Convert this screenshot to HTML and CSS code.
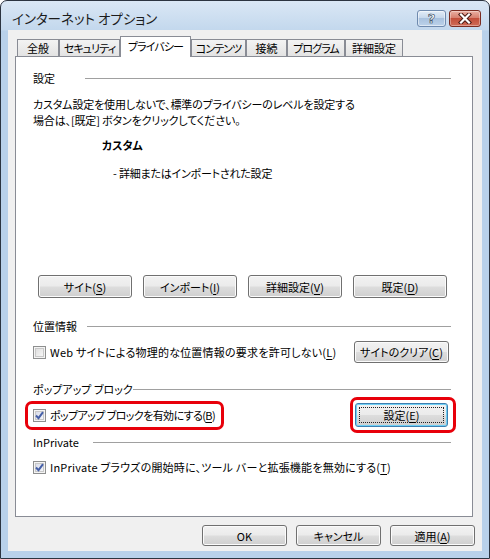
FILE: index.html
```html
<!DOCTYPE html>
<html lang="ja">
<head>
<meta charset="utf-8">
<title>インターネット オプション</title>
<link rel="stylesheet" href="styles.css">
</head>
<body>
<div class="window">
  <div class="titlebar">
    <div class="title">インターネット オプション</div>
    <div class="caption-buttons">
      <div class="cap help"><span>?</span></div>
      <div class="cap close">
        <svg width="16" height="11" viewBox="0 0 16 11">
          <path d="M4 1.5 L12 9.5 M12 1.5 L4 9.5" stroke="#4a1a14" stroke-width="4.2" stroke-linecap="square" fill="none"/>
          <path d="M4 1.5 L12 9.5 M12 1.5 L4 9.5" stroke="#ffffff" stroke-width="2.2" stroke-linecap="square" fill="none"/>
        </svg>
      </div>
    </div>
  </div>
  <div class="client">
    <div class="tabs">
      <div class="tab t1">全般</div>
      <div class="tab t2">セキュリティ</div>
      <div class="tab t3 active">プライバシー</div>
      <div class="tab t4">コンテンツ</div>
      <div class="tab t5">接続</div>
      <div class="tab t6">プログラム</div>
      <div class="tab t7">詳細設定</div>
    </div>
    <div class="panel">
      <div class="gh"><span>設定</span><i class="rule r1"></i></div>
      <p class="desc">カスタム設定を使用しないで、標準のプライバシーのレベルを設定する<br>場合は、[既定] ボタンをクリックしてください。</p>
      <div class="level">カスタム</div>
      <div class="level-desc">- 詳細またはインポートされた設定</div>
      <div class="btn-row">
        <div class="btn w94">サイト(<u>S</u>)</div>
        <div class="btn w94">インポート(<u>I</u>)</div>
        <div class="btn w94">詳細設定(<u>V</u>)</div>
        <div class="btn w94">既定(<u>D</u>)</div>
      </div>

      <div class="gh g2"><span>位置情報</span><i class="rule r2"></i></div>
      <div class="row row2">
        <div class="check">
          <span class="cb"></span>
          <span class="loose">Web サイトによる物理的な位置情報の要求を許可しない(<u>L</u>)</span>
        </div>
        <div class="btn clear">サイトのクリア(<u>C</u>)</div>
      </div>

      <div class="gh g3"><span>ポップアップ ブロック</span><i class="rule r3"></i></div>
      <div class="row row3">
        <div class="check marked">
          <span class="cb on">
            <svg width="11" height="11" viewBox="0 0 11 11"><path d="M2 5.5 L4.5 8.2 L9 2.2" stroke="#4660a8" stroke-width="2" fill="none"/></svg>
          </span>
          <span class="tight">ポップアップ ブロックを有効にする(<u>B</u>)</span>
        </div>
        <div class="btn default marked-btn"><span class="focus">設定(<u>E</u>)</span></div>
      </div>

      <div class="gh g4"><span>InPrivate</span><i class="rule r4"></i></div>
      <div class="row row4">
        <div class="check">
          <span class="cb on">
            <svg width="11" height="11" viewBox="0 0 11 11"><path d="M2 5.5 L4.5 8.2 L9 2.2" stroke="#4660a8" stroke-width="2" fill="none"/></svg>
          </span>
          <span class="loose">InPrivate ブラウズの開始時に、ツール バーと拡張機能を無効にする(<u>T</u>)</span>
        </div>
      </div>
    </div>
    <div class="footer">
      <div class="btn foot">OK</div>
      <div class="btn foot">キャンセル</div>
      <div class="btn foot">適用(<u>A</u>)</div>
    </div>
  </div>
</div>
</body>
</html>
```

FILE: styles.css
```css
html, body {
  margin: 0;
  padding: 0;
}
body {
  width: 490px;
  height: 559px;
  overflow: hidden;
  background: #ffffff;
  font-family: "Noto Sans CJK JP", "Noto Sans", sans-serif;
  font-size: 11px;
  font-feature-settings: "palt" 1;
  color: #000;
}
.window {
  width: 490px;
  height: 559px;
  box-sizing: border-box;
  border: 1px solid #2c3440;
  border-radius: 7px 7px 0 0;
  background: linear-gradient(#dae7f5 0px, #c3d8ed 29px, #b9d1ea 30px);
  padding: 0 7px 7px 7px;
  display: flex;
  flex-direction: column;
}
.titlebar {
  height: 29px;
  display: flex;
  justify-content: space-between;
}
.title {
  padding-left: 4px;
  margin-top: 8px;
  font-size: 13.5px;
  line-height: 18px;
  color: #1c1c1c;
}
.caption-buttons {
  display: flex;
  gap: 3px;
  margin-top: 9px;
  margin-right: 1px;
}
.cap {
  box-sizing: border-box;
  height: 17px;
  border-radius: 3px;
  display: flex;
  align-items: center;
  justify-content: center;
}
.help {
  width: 29px;
  border: 1px solid #6f8aae;
  background: linear-gradient(#e3edf8 0%, #c6d8ec 45%, #a9c2df 50%, #bcd2ea 100%);
  box-shadow: inset 0 0 0 1px rgba(255,255,255,0.5);
}
.help span {
  font-family: "DejaVu Sans", sans-serif;
  font-weight: bold;
  font-size: 13px;
  line-height: 13px;
  color: #fff;
  -webkit-text-stroke: 0.6px #2b3a52;
}
.close {
  width: 32px;
  border: 1px solid #7a2c22;
  background: linear-gradient(#eab0a3 0%, #d7806f 45%, #c24f3b 50%, #cf6b57 100%);
  box-shadow: inset 0 0 0 1px rgba(255,255,255,0.35);
}
.client {
  flex: 1;
  background: #f0f0f0;
  padding: 6px 9px 0 7px;
  display: flex;
  flex-direction: column;
}
.tabs {
  display: flex;
  align-items: flex-end;
  height: 20px;
  margin-left: 2px;
}
.tab {
  box-sizing: border-box;
  height: 17px;
  border: 1px solid #898c95;
  border-bottom: none;
  background: linear-gradient(#f3f3f3, #e3e3e3);
  text-align: center;
  line-height: 16px;
  white-space: nowrap;
  font-size: 11px;
  letter-spacing: -0.9px;
}
.tab.active {
  height: 21px;
  margin-bottom: -1px;
  background: #ffffff;
  position: relative;
  z-index: 1;
  line-height: 18px;
}
.t1 { width: 42px; letter-spacing: 0; }
.t2 { width: 61px; }
.t3 { width: 71px; }
.t4 { width: 55px; }
.t5 { width: 41px; letter-spacing: 0; }
.t6 { width: 58px; }
.t7 { width: 58px; letter-spacing: 0; }
.panel {
  flex: 1;
  border: 1px solid #898c95;
  background: #ffffff;
  padding: 13px 21px 0 17px;
  display: flex;
  flex-direction: column;
}
.gh {
  display: flex;
  align-items: center;
  height: 16px;
  line-height: 16px;
  white-space: nowrap;
}
.rule {
  margin-left: auto;
  height: 0;
  border-top: 1px solid #a0a0a0;
}
.r1 { width: 366px; }
.r2 { width: 364px; }
.r3 { width: 331px; }
.r4 { width: 358px; }
.desc {
  margin: 10px 0 0 0;
  line-height: 16px;
  letter-spacing: -0.15px;
}
.level {
  margin-top: 9px;
  margin-left: 69px;
  font-weight: bold;
  line-height: 16px;
}
.level-desc {
  margin-top: 12px;
  margin-left: 80px;
  line-height: 16px;
  letter-spacing: -0.2px;
}
.btn-row {
  margin-top: 94px;
  padding-left: 5px;
  display: flex;
  gap: 11px;
}
.btn {
  box-sizing: border-box;
  height: 23px;
  border: 1px solid #707070;
  border-radius: 3px;
  background: linear-gradient(#f2f2f2 0%, #ebebeb 48%, #dddddd 52%, #cfcfcf 100%);
  box-shadow: inset 0 0 0 1px #fbfbfb;
  display: flex;
  align-items: center;
  justify-content: center;
  white-space: nowrap;
  line-height: 16px;
}
.w94 { width: 94px; }
.g2 { margin-top: 20px; }
.row {
  display: flex;
  align-items: center;
  justify-content: space-between;
}
.row2 {
  margin-top: 7px;
  height: 22px;
}
.clear {
  width: 95px;
  height: 22px;
  margin-right: 2px;
}
.g3 { margin-top: 18px; }
.row3 {
  margin-top: 6px;
  height: 24px;
}
.g4 { margin-top: 7px; }
.row4 {
  margin-top: 9px;
  height: 16px;
}
.check {
  display: flex;
  align-items: center;
  gap: 4px;
  line-height: 16px;
  white-space: nowrap;
  position: relative;
}
.tight {
  letter-spacing: -0.6px;
}
.loose {
  letter-spacing: 0.22px;
}
.cb {
  box-sizing: border-box;
  width: 13px;
  height: 13px;
  border: 1px solid #8e8f8f;
  background: linear-gradient(135deg, #d8d8d8 0%, #f2f2f2 70%, #ffffff 100%);
  box-shadow: inset 0 0 0 1px #f4f4f4, inset 0 0 0 2px #c8c8c8;
  display: flex;
  align-items: center;
  justify-content: center;
}
.cb.on {
  background: linear-gradient(135deg, #d2d6e6 0%, #eef0f6 70%, #ffffff 100%);
}
.marked::after {
  content: "";
  position: absolute;
  left: -8px;
  top: -6px;
  bottom: -7px;
  width: 199px;
  box-sizing: border-box;
  border: 3px solid #e8000a;
  border-radius: 7px;
}
.default {
  width: 93px;
  height: 24px;
  margin-right: 3px;
  border-color: #3c7fb1;
  box-shadow: inset 0 0 0 1px #6fd0f4;
  position: relative;
}
.default .focus {
  box-sizing: border-box;
  position: absolute;
  inset: 3px;
  border: 1px dotted #222;
  display: flex;
  align-items: center;
  justify-content: center;
}
.marked-btn::after {
  content: "";
  position: absolute;
  left: -6px;
  right: -9px;
  top: -7px;
  bottom: -7px;
  border: 3px solid #e8000a;
  border-radius: 7px;
}
.footer {
  margin-top: 8px;
  margin-right: -2px;
  margin-bottom: 5px;
  display: flex;
  justify-content: flex-end;
  gap: 9px;
}
.foot {
  width: 85px;
  height: 21px;
}
u {
  text-decoration: underline;
  text-underline-offset: 2px;
}
```
